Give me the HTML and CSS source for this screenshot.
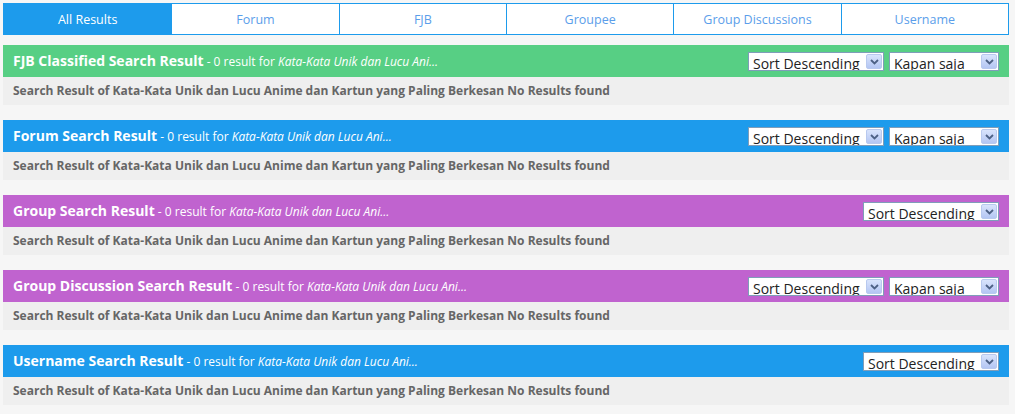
FILE: index.html
```html
<!DOCTYPE html>
<html>
<head>
<meta charset="utf-8">
<link rel="stylesheet" href="styles.css">
</head>
<body>
<div class="page">
  <div class="tabs">
    <div class="tab active">All Results</div>
    <div class="tab">Forum</div>
    <div class="tab">FJB</div>
    <div class="tab">Groupee</div>
    <div class="tab">Group Discussions</div>
    <div class="tab">Username</div>
  </div>

  <div class="sections">
  <div class="section">
    <div class="head green">
      <div class="title"><b>FJB Classified Search Result</b> - 0 result for <i>Kata-Kata Unik dan Lucu Ani...</i></div>
      <div class="controls">
        <span class="sel w136"><span class="val">Sort Descending</span><span class="arr"><svg width="9" height="6" viewBox="0 0 9 6"><path d="M1 1 L4.5 4.5 L8 1" fill="none" stroke="#4d6185" stroke-width="1.8"/></svg></span></span>
        <span class="sel w110"><span class="val">Kapan saja</span><span class="arr"><svg width="9" height="6" viewBox="0 0 9 6"><path d="M1 1 L4.5 4.5 L8 1" fill="none" stroke="#4d6185" stroke-width="1.8"/></svg></span></span>
      </div>
    </div>
    <div class="body">Search Result of Kata-Kata Unik dan Lucu Anime dan Kartun yang Paling Berkesan No Results found</div>
  </div>

  <div class="section">
    <div class="head blue">
      <div class="title"><b>Forum Search Result</b> - 0 result for <i>Kata-Kata Unik dan Lucu Ani...</i></div>
      <div class="controls">
        <span class="sel w136"><span class="val">Sort Descending</span><span class="arr"><svg width="9" height="6" viewBox="0 0 9 6"><path d="M1 1 L4.5 4.5 L8 1" fill="none" stroke="#4d6185" stroke-width="1.8"/></svg></span></span>
        <span class="sel w110"><span class="val">Kapan saja</span><span class="arr"><svg width="9" height="6" viewBox="0 0 9 6"><path d="M1 1 L4.5 4.5 L8 1" fill="none" stroke="#4d6185" stroke-width="1.8"/></svg></span></span>
      </div>
    </div>
    <div class="body">Search Result of Kata-Kata Unik dan Lucu Anime dan Kartun yang Paling Berkesan No Results found</div>
  </div>

  <div class="section">
    <div class="head purple">
      <div class="title"><b>Group Search Result</b> - 0 result for <i>Kata-Kata Unik dan Lucu Ani...</i></div>
      <div class="controls">
        <span class="sel w136"><span class="val">Sort Descending</span><span class="arr"><svg width="9" height="6" viewBox="0 0 9 6"><path d="M1 1 L4.5 4.5 L8 1" fill="none" stroke="#4d6185" stroke-width="1.8"/></svg></span></span>
      </div>
    </div>
    <div class="body">Search Result of Kata-Kata Unik dan Lucu Anime dan Kartun yang Paling Berkesan No Results found</div>
  </div>

  <div class="section">
    <div class="head purple">
      <div class="title"><b>Group Discussion Search Result</b> - 0 result for <i>Kata-Kata Unik dan Lucu Ani...</i></div>
      <div class="controls">
        <span class="sel w136"><span class="val">Sort Descending</span><span class="arr"><svg width="9" height="6" viewBox="0 0 9 6"><path d="M1 1 L4.5 4.5 L8 1" fill="none" stroke="#4d6185" stroke-width="1.8"/></svg></span></span>
        <span class="sel w110"><span class="val">Kapan saja</span><span class="arr"><svg width="9" height="6" viewBox="0 0 9 6"><path d="M1 1 L4.5 4.5 L8 1" fill="none" stroke="#4d6185" stroke-width="1.8"/></svg></span></span>
      </div>
    </div>
    <div class="body">Search Result of Kata-Kata Unik dan Lucu Anime dan Kartun yang Paling Berkesan No Results found</div>
  </div>

  <div class="section">
    <div class="head blue">
      <div class="title"><b>Username Search Result</b> - 0 result for <i>Kata-Kata Unik dan Lucu Ani...</i></div>
      <div class="controls">
        <span class="sel w136"><span class="val">Sort Descending</span><span class="arr"><svg width="9" height="6" viewBox="0 0 9 6"><path d="M1 1 L4.5 4.5 L8 1" fill="none" stroke="#4d6185" stroke-width="1.8"/></svg></span></span>
      </div>
    </div>
    <div class="body">Search Result of Kata-Kata Unik dan Lucu Anime dan Kartun yang Paling Berkesan No Results found</div>
  </div>
  </div>
</div>
</body>
</html>
```

FILE: styles.css
```css
html, body {
  margin: 0;
  padding: 0;
  background: #f6f6f6;
}
body {
  font-family: "Open Sans", "DejaVu Sans", sans-serif;
}
.page {
  width: 1006px;
  padding: 3px 0 0 3px;
}
.tabs {
  display: grid;
  grid-template-columns: repeat(6, 1fr);
  border: 1px solid #1d9bec;
  background: #fff;
  height: 30px;
}
.tab {
  display: flex;
  align-items: center;
  justify-content: center;
  font-size: 12.5px;
  color: #5b9eea;
  border-left: 1px solid #1d9bec;
}
.tab:first-child {
  border-left: none;
}
.tab.active {
  background: #1d9bec;
  color: #fff;
}
.sections {
  display: flex;
  flex-direction: column;
  gap: 15px;
  margin-top: 10px;
}
.head {
  height: 32px;
  display: flex;
  align-items: center;
  justify-content: space-between;
  padding: 0 10px 0 10px;
  color: #fff;
  font-size: 12px;
}
.head.green { background: #57cf84; }
.head.blue { background: #1d9bec; }
.head.purple { background: #c063cf; }
.title {
  margin-top: -1px;
}
.title b {
  font-size: 14px;
  font-weight: 700;
}
.title i {
  font-style: italic;
}
.controls {
  display: flex;
  gap: 5px;
  margin-top: 1px;
}
.sel {
  position: relative;
  display: block;
  height: 19px;
  border: 1px solid #7f9db9;
  background: #fff;
  overflow: hidden;
  box-sizing: border-box;
}
.w136 { width: 136px; }
.w110 { width: 110px; }
.val {
  display: block;
  font-size: 14px;
  line-height: 20px;
  color: #222;
  padding-left: 4px;
  white-space: nowrap;
  margin-top: 1px;
}
.arr {
  position: absolute;
  right: 1px;
  top: 1px;
  width: 16px;
  height: 15px;
  box-sizing: border-box;
  border: 1px solid #b8c9ef;
  border-radius: 2px;
  background: linear-gradient(#d9e4fc, #b4c6f3);
  display: flex;
  align-items: center;
  justify-content: center;
}
.body {
  height: 28px;
  background: #efefef;
  padding-left: 10px;
  font-size: 12px;
  font-weight: 700;
  color: #666;
  line-height: 27px;
}
```
